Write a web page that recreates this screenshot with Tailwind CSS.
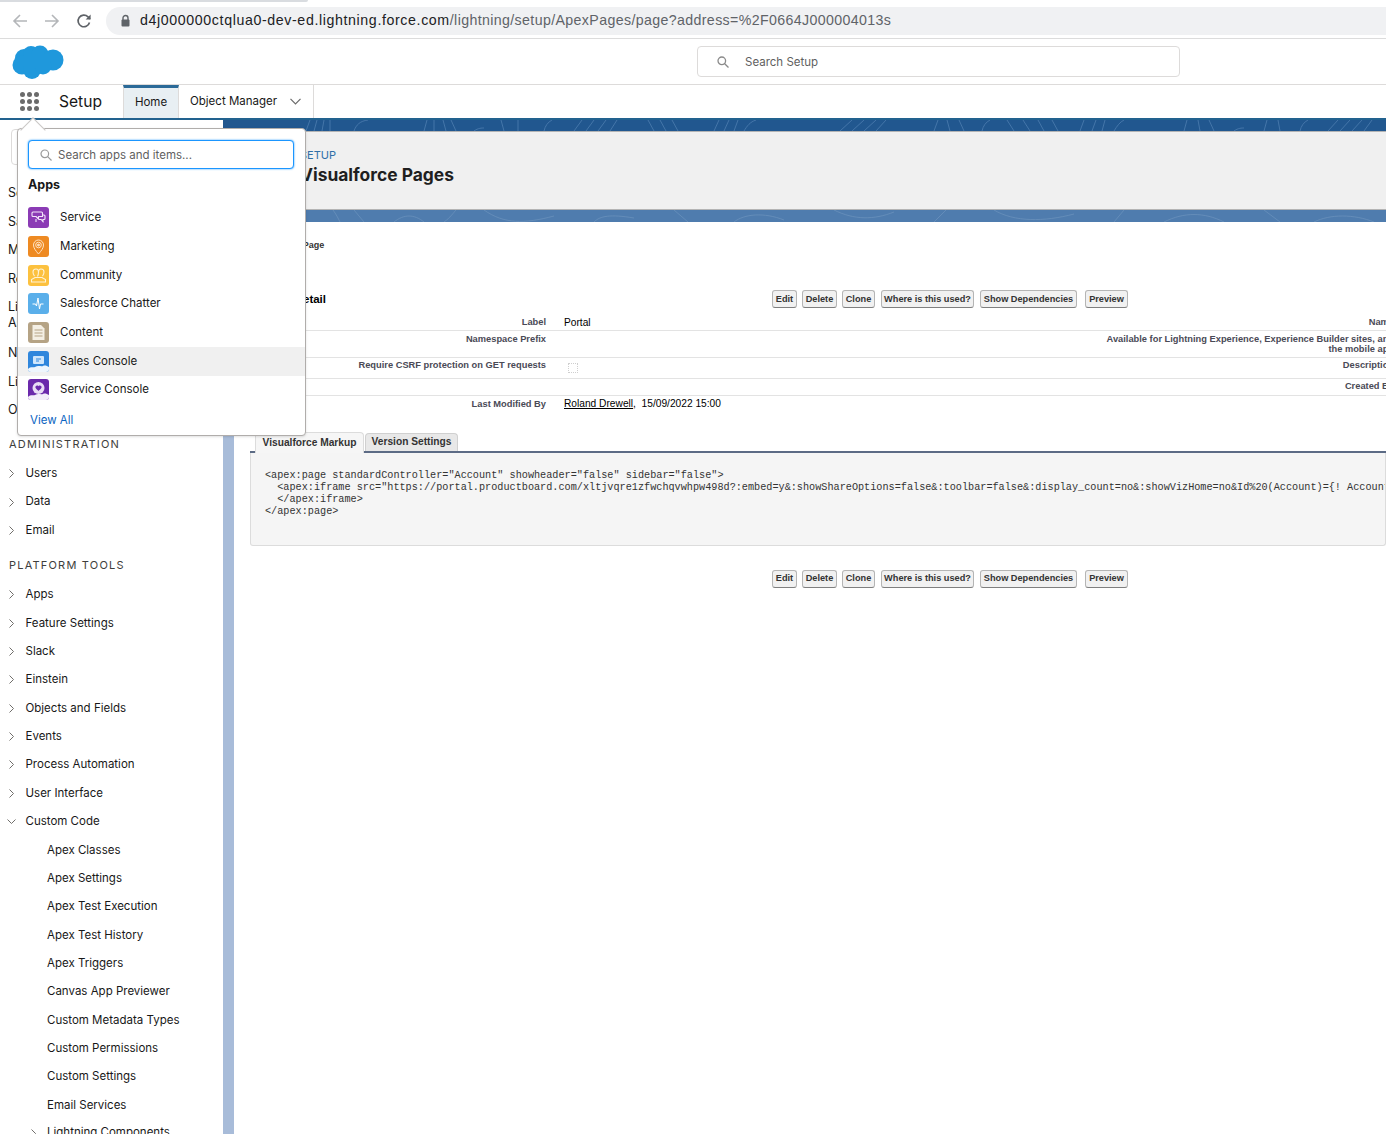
<!DOCTYPE html>
<html lang="en">
<head>
  <meta charset="UTF-8">
  <title>Visualforce Pages</title>
  <script src="https://cdn.jsdelivr.net/npm/@tailwindcss/browser@4"></script>
</head>
<body class="bg-white h-[1134px] overflow-hidden relative font-['Inter',sans-serif] text-[#181818]">

  <!-- browser bar -->
  <div class="h-[39px] border-b border-[#dcdcdc] relative">
    <div class="h-[2px] w-[308px] bg-[#d9dce0] rounded-br"></div>
    <div class="flex items-center h-[37px]">
      <svg class="ml-[12px] w-[16px] h-[16px]" viewBox="0 0 16 16" fill="none" stroke="#b4b6b9" stroke-width="1.6"><path d="M15 8H2M8 2L2 8l6 6"/></svg>
      <svg class="ml-[16px] w-[16px] h-[16px]" viewBox="0 0 16 16" fill="none" stroke="#b4b6b9" stroke-width="1.6"><path d="M1 8h13M8 2l6 6-6 6"/></svg>
      <svg class="ml-[16px] w-[16px] h-[16px]" viewBox="0 0 16 16" fill="none" stroke="#5f6368" stroke-width="1.7"><path d="M13.5 9.5A5.8 5.8 0 1 1 12 3.8L14 6"/><path d="M14.6 1.5v5h-5" fill="#5f6368" stroke="none"/></svg>
      <div class="ml-[14px] flex-1 h-[28px] rounded-l-full bg-[#f0f1f3] flex items-center pl-[14px]">
        <svg class="w-[11px] h-[13px]" viewBox="0 0 11 13"><path d="M3 6V4a2.5 2.5 0 0 1 5 0v2" fill="none" stroke="#5f6368" stroke-width="1.4"/><rect x="1.5" y="5.5" width="8" height="7" rx="1" fill="#5f6368"/></svg>
        <div class="ml-[9px] text-[14.2px] font-['Liberation_Sans',sans-serif] text-[#5f6368] whitespace-nowrap"><span class="text-[#202124] tracking-[0.62px]">d4j000000ctqlua0-dev-ed.lightning.force.com</span><span class="tracking-[0.37px]">/lightning/setup/ApexPages/page?address=%2F0664J000004013s</span></div>
      </div>
    </div>
  </div>

  <!-- global header -->
  <div class="h-[46px] border-b border-[#dddbda] flex items-center relative">
    <svg class="absolute left-[12px] top-[5px] w-[52px] h-[36px]" viewBox="0 0 52 36" fill="#1f98dc">
      <circle cx="12" cy="14" r="9"/><circle cx="19" cy="10" r="8"/><circle cx="28" cy="10" r="8.5"/><circle cx="41" cy="16" r="10.5"/><circle cx="10" cy="21" r="9.5"/><circle cx="20" cy="26" r="9"/><circle cx="31" cy="22" r="8.5"/><rect x="12" y="10" width="26" height="14"/>
    </svg>
    <div class="ml-[697px] w-[483px] h-[31px] border border-[#dddbda] rounded flex items-center">
      <svg class="ml-[19px] w-[12px] h-[12px]" viewBox="0 0 12 12" fill="none" stroke="#8a8a8a" stroke-width="1.3"><circle cx="4.8" cy="4.8" r="3.8"/><path d="M7.7 7.7L11.5 11.5"/></svg>
      <span class="ml-[16px] pt-[2px] text-[11.5px] text-[#5f5f5f]">Search Setup</span>
    </div>
  </div>

  <!-- app nav -->
  <div class="h-[33px] flex items-stretch">
    <div class="w-[123px] flex items-center">
      <div class="ml-[20px] grid grid-cols-3 gap-[2px]">
        <i class="w-[5px] h-[5px] rounded-full bg-[#6b6b6b]"></i><i class="w-[5px] h-[5px] rounded-full bg-[#6b6b6b]"></i><i class="w-[5px] h-[5px] rounded-full bg-[#6b6b6b]"></i>
        <i class="w-[5px] h-[5px] rounded-full bg-[#6b6b6b]"></i><i class="w-[5px] h-[5px] rounded-full bg-[#6b6b6b]"></i><i class="w-[5px] h-[5px] rounded-full bg-[#6b6b6b]"></i>
        <i class="w-[5px] h-[5px] rounded-full bg-[#6b6b6b]"></i><i class="w-[5px] h-[5px] rounded-full bg-[#6b6b6b]"></i><i class="w-[5px] h-[5px] rounded-full bg-[#6b6b6b]"></i>
      </div>
      <span class="ml-[20px] text-[15.6px]">Setup</span>
    </div>
    <div class="w-[56px] bg-[#e8eff3] border-t-[3px] border-[#2b6a98] border-x border-x-[#dddbda] flex items-center justify-center text-[11.5px]">Home</div>
    <div class="w-[135px] border-r border-[#dddbda] flex items-center pl-[11px] text-[11.5px]">
      <span class="pt-[1px]">Object Manager</span>
      <svg class="ml-[13px] w-[11px] h-[7px]" viewBox="0 0 11 7" fill="none" stroke="#6b6b6b" stroke-width="1.2"><path d="M.5 .8L5.5 6l5-5.2"/></svg>
    </div>
  </div>

  <!-- blue rule under nav -->
  <div class="h-[2px] bg-[#22628f]"></div>

  <!-- page body -->
  <div class="flex h-[1014px] overflow-hidden">

    <!-- sidebar -->
    <div class="w-[223px] shrink-0 text-[11.5px]">
      <div class="mx-[11px] mt-[9px] h-[36px] border border-[#dddbda] rounded"></div>
      <div class="mt-[14px] pl-[8px] text-[12.5px]">
        <div class="h-[28.5px] leading-[28.5px]">Service Setup</div>
        <div class="h-[28.5px] leading-[28.5px]">Sales Setup</div>
        <div class="h-[28.5px] leading-[28.5px]">Multi-Factor</div>
        <div class="h-[28.5px] leading-[28.5px]">Release Updates</div>
        <div class="h-[46px] leading-[16px] pt-[6px]">Lightning<br>Assistant</div>
        <div class="h-[28.5px] leading-[28.5px]">New Users</div>
        <div class="h-[28.5px] leading-[28.5px]">Lightning Usage</div>
        <div class="h-[28.5px] leading-[28.5px]">Optimizer</div>
      </div>
      <div class="mt-[5px] h-[28px] leading-[28px] pl-[9px] text-[11px] tracking-[1.2px] text-[#3e3e3c]">ADMINISTRATION</div>
      <div class="mt-[2px]">
        <div class="h-[28.4px] flex items-center"><svg class="ml-[9px] w-[5px] h-[9px]" viewBox="0 0 5 9" fill="none" stroke="#706e6b"><path d="M.5.5l4 4-4 4"/></svg><span class="ml-[11.5px]">Users</span></div>
        <div class="h-[28.4px] flex items-center"><svg class="ml-[9px] w-[5px] h-[9px]" viewBox="0 0 5 9" fill="none" stroke="#706e6b"><path d="M.5.5l4 4-4 4"/></svg><span class="ml-[11.5px]">Data</span></div>
        <div class="h-[28.4px] flex items-center"><svg class="ml-[9px] w-[5px] h-[9px]" viewBox="0 0 5 9" fill="none" stroke="#706e6b"><path d="M.5.5l4 4-4 4"/></svg><span class="ml-[11.5px]">Email</span></div>
      </div>
      <div class="mt-[6px] h-[28px] leading-[28px] pl-[9px] text-[11px] tracking-[1.2px] text-[#3e3e3c]">PLATFORM TOOLS</div>
      <div class="mt-[2px]">
        <div class="h-[28.33px] flex items-center"><svg class="ml-[9px] w-[5px] h-[9px]" viewBox="0 0 5 9" fill="none" stroke="#706e6b"><path d="M.5.5l4 4-4 4"/></svg><span class="ml-[11.5px]">Apps</span></div>
        <div class="h-[28.33px] flex items-center"><svg class="ml-[9px] w-[5px] h-[9px]" viewBox="0 0 5 9" fill="none" stroke="#706e6b"><path d="M.5.5l4 4-4 4"/></svg><span class="ml-[11.5px]">Feature Settings</span></div>
        <div class="h-[28.33px] flex items-center"><svg class="ml-[9px] w-[5px] h-[9px]" viewBox="0 0 5 9" fill="none" stroke="#706e6b"><path d="M.5.5l4 4-4 4"/></svg><span class="ml-[11.5px]">Slack</span></div>
        <div class="h-[28.33px] flex items-center"><svg class="ml-[9px] w-[5px] h-[9px]" viewBox="0 0 5 9" fill="none" stroke="#706e6b"><path d="M.5.5l4 4-4 4"/></svg><span class="ml-[11.5px]">Einstein</span></div>
        <div class="h-[28.33px] flex items-center"><svg class="ml-[9px] w-[5px] h-[9px]" viewBox="0 0 5 9" fill="none" stroke="#706e6b"><path d="M.5.5l4 4-4 4"/></svg><span class="ml-[11.5px]">Objects and Fields</span></div>
        <div class="h-[28.33px] flex items-center"><svg class="ml-[9px] w-[5px] h-[9px]" viewBox="0 0 5 9" fill="none" stroke="#706e6b"><path d="M.5.5l4 4-4 4"/></svg><span class="ml-[11.5px]">Events</span></div>
        <div class="h-[28.33px] flex items-center"><svg class="ml-[9px] w-[5px] h-[9px]" viewBox="0 0 5 9" fill="none" stroke="#706e6b"><path d="M.5.5l4 4-4 4"/></svg><span class="ml-[11.5px]">Process Automation</span></div>
        <div class="h-[28.33px] flex items-center"><svg class="ml-[9px] w-[5px] h-[9px]" viewBox="0 0 5 9" fill="none" stroke="#706e6b"><path d="M.5.5l4 4-4 4"/></svg><span class="ml-[11.5px]">User Interface</span></div>
        <div class="h-[28.33px] flex items-center"><svg class="ml-[7px] w-[9px] h-[5px]" viewBox="0 0 9 5" fill="none" stroke="#706e6b"><path d="M.5.5l4 4 4-4"/></svg><span class="ml-[9.5px]">Custom Code</span></div>
        <div class="h-[28.33px] leading-[28.33px] pl-[47px]">Apex Classes</div>
        <div class="h-[28.33px] leading-[28.33px] pl-[47px]">Apex Settings</div>
        <div class="h-[28.33px] leading-[28.33px] pl-[47px]">Apex Test Execution</div>
        <div class="h-[28.33px] leading-[28.33px] pl-[47px]">Apex Test History</div>
        <div class="h-[28.33px] leading-[28.33px] pl-[47px]">Apex Triggers</div>
        <div class="h-[28.33px] leading-[28.33px] pl-[47px]">Canvas App Previewer</div>
        <div class="h-[28.33px] leading-[28.33px] pl-[47px]">Custom Metadata Types</div>
        <div class="h-[28.33px] leading-[28.33px] pl-[47px]">Custom Permissions</div>
        <div class="h-[28.33px] leading-[28.33px] pl-[47px]">Custom Settings</div>
        <div class="h-[28.33px] leading-[28.33px] pl-[47px]">Email Services</div>
        <div class="h-[28.33px] flex items-center"><svg class="ml-[31px] w-[5px] h-[9px]" viewBox="0 0 5 9" fill="none" stroke="#706e6b"><path d="M.5.5l4 4-4 4"/></svg><span class="ml-[11px]">Lightning Components</span></div>
      </div>
    </div>

    <!-- divider strip -->
    <div class="w-[11px] shrink-0 bg-[#a8bcd9]"><div class="h-[12px] bg-[#21578f]"></div></div>

    <!-- main -->
    <div class="w-[1152px] shrink-0 overflow-hidden">
      <!-- page title band -->
      <div class="h-[102px] bg-[#21578f] relative overflow-hidden">
        <svg class="absolute left-0 top-0 w-[1152px] h-[11px]" viewBox="0 0 1152 11" fill="none" stroke="#4e7eb0" stroke-width="0.8">
          <path d="M72 11l4-11M80 11l3-11M88 11l2-11M96 11V0M120 11c2-6 6-10 14-11M190 11l3-11M200 11V0M212 11l-3-11M222 11l-5-11M240 11c4-3 8-3 10-3M270 11l-3-11M284 11V0M310 11c1-5 4-9 8-11M340 11l8-11M352 11l8-11M364 11l8-11M376 11l7-11M420 11l-6-11M432 11l-6-11M444 11l-6-11M480 11l5-11M490 11l5-11M500 11l4-11M510 11c3-5 6-9 12-11M606 11l12-11M618 11l12-11M630 11l12-11M642 11l10-11M700 11l4-11M716 11l-3-11M730 11l-5-11M748 11c1-5 4-9 8-11M780 11l-7-11M796 11l-7-11M810 11l-6-11M824 11l-6-11M846 11l4-11M858 11l4-11M868 11l3-11M880 11c3-5 6-9 10-11M950 11l3-11M966 11l-2-11M980 11l-5-11M1000 11c4-3 8-3 10-3M1030 11l3-11M1046 11l-2-11M1066 11c1-5 4-9 8-11M1094 11l10-11M1106 11l10-11M1118 11l10-11M1130 11l8-11"/>
        </svg>
        <div class="absolute inset-x-0 bottom-0 h-[12px] bg-[#4f7cae]">
          <svg class="w-[1152px] h-[12px]" viewBox="0 0 1152 12" fill="none" stroke="#6d94bd" stroke-width="0.7"><path d="M106 12c-2-4-4-8-7-12M120 0l10 12M160 12c10-8 20-8 30 0M210 12c6-4 10-10 12-12M250 0c20 14 40 14 70 6M360 12c6-6 16-8 40-4M440 0l14 12M500 12c10-8 30-10 50-2M600 0c20 10 40 10 60 2M700 12l12-12M760 0c20 12 50 12 80 4M880 12l10-12M930 12c20-10 40-10 60 0M1030 0l16 12M1080 12c16-8 40-8 60 0"/></svg>
        </div>
        <div class="absolute inset-x-0 top-[11px] h-[79px] bg-[#f0f0f0] border-y border-[#b4b4b4] pl-[66px] pt-[17px]">
          <div class="text-[11px] leading-[13px] text-[#2f6fa7]">SETUP</div>
          <div class="mt-[1px] text-[17.4px] leading-[24px] font-bold text-[#1f1f1f]">Visualforce Pages</div>
        </div>
      </div>

      <!-- detail page -->
      <div class="font-['Liberation_Sans',sans-serif] text-[#000]">
        <div class="pl-[18px] pt-[17px] h-[49px] text-[9px] leading-[12px] font-bold text-[#333]">Visualforce Page</div>

        <div class="flex items-center h-[18px] mt-[19px]">
          <div class="w-[538px] pl-[30px] pt-[1px] text-[11.5px] font-bold">Page Detail</div>
          <div class="flex text-[9.2px] font-bold text-[#333]">
            <div class="h-[18px] w-[25px] pt-[1px] flex items-center justify-center border border-[#b5b5b5] border-b-[#7f7f7f] rounded-[3px] bg-[#f1f1f1]">Edit</div>
            <div class="ml-[5px] h-[18px] w-[35px] pt-[1px] flex items-center justify-center border border-[#b5b5b5] border-b-[#7f7f7f] rounded-[3px] bg-[#f1f1f1]">Delete</div>
            <div class="ml-[5px] h-[18px] w-[33px] pt-[1px] flex items-center justify-center border border-[#b5b5b5] border-b-[#7f7f7f] rounded-[3px] bg-[#f1f1f1]">Clone</div>
            <div class="ml-[6px] h-[18px] w-[93px] pt-[1px] flex items-center justify-center border border-[#b5b5b5] border-b-[#7f7f7f] rounded-[3px] bg-[#f1f1f1]">Where is this used?</div>
            <div class="ml-[6px] h-[18px] w-[97px] pt-[1px] flex items-center justify-center border border-[#b5b5b5] border-b-[#7f7f7f] rounded-[3px] bg-[#f1f1f1]">Show Dependencies</div>
            <div class="ml-[8px] h-[18px] w-[43px] pt-[1px] flex items-center justify-center border border-[#b5b5b5] border-b-[#7f7f7f] rounded-[3px] bg-[#f1f1f1]">Preview</div>
          </div>
        </div>

        <!-- field table, runs past the right edge like the reference -->
        <div class="mt-[6px] w-[1144px] ml-[16px] text-[9.3px] leading-[10px]">
          <div class="grid grid-cols-[296px_1fr_296px] h-[17px] border-b border-[#e3e3e3]">
            <div class="text-right font-bold text-[#4a4a56] pt-[3px]">Label</div><div class="pl-[18px] pt-[4px] text-[10.2px]">Portal</div><div class="text-right font-bold text-[#4a4a56] pt-[3px]">Name</div>
          </div>
          <div class="grid grid-cols-[296px_1fr_296px] h-[27px] border-b border-[#e3e3e3]">
            <div class="text-right font-bold text-[#4a4a56] pt-[3px]">Namespace Prefix</div><div></div><div class="text-right font-bold text-[#4a4a56] pt-[3px]">Available for Lightning Experience, Experience Builder sites, and the mobile app</div>
          </div>
          <div class="grid grid-cols-[296px_1fr_296px] h-[21px] border-b border-[#e3e3e3]">
            <div class="text-right font-bold text-[#4a4a56] pt-[2px]">Require CSRF protection on GET requests</div><div class="pl-[18px] pt-[5px]"><div class="ml-[4px] w-[10px] h-[10px] border border-dotted border-[#cfcfcf]"></div></div><div class="text-right font-bold text-[#4a4a56] pt-[2px]">Description</div>
          </div>
          <div class="grid grid-cols-[296px_1fr_296px] h-[17px] border-b border-[#e3e3e3]">
            <div></div><div></div><div class="text-right font-bold text-[#4a4a56] pt-[2px]">Created By</div>
          </div>
          <div class="grid grid-cols-[296px_1fr_296px] h-[18px]">
            <div class="text-right font-bold text-[#4a4a56] pt-[3px]">Last Modified By</div><div class="pl-[18px] pt-[3px] text-[10.2px]"><span class="underline">Roland Drewell</span>,&nbsp; 15/09/2022 15:00</div><div></div>
          </div>
        </div>

        <!-- tabs -->
        <div class="mt-[19px] ml-[16px] h-[20px] flex items-end border-b-2 border-[#5c6b85] text-[10.2px] font-bold text-[#333]">
          <div class="ml-[5px] w-[109px] h-[21px] -mb-[2px] bg-[#f6f6f6] border border-b-0 border-[#dcdcdc] rounded-t-[4px] flex items-center justify-center">Visualforce Markup</div>
          <div class="ml-[1px] w-[93px] h-[18px] pb-[1px] bg-[#e8e8e8] border border-b-0 border-[#d0d0d0] rounded-t-[4px] flex items-center justify-center">Version Settings</div>
        </div>
        <div class="ml-[16px] h-[93px] bg-[#f5f5f5] border border-t-0 border-[#dcdcdc] rounded-b-[3px] pl-[14px] pt-[17px] font-['Liberation_Mono',monospace] text-[10.2px] leading-[12px] text-[#333] whitespace-pre overflow-hidden">&lt;apex:page standardController="Account" showheader="false" sidebar="false"&gt;
  &lt;apex:iframe src="https://portal.productboard.com/xltjvqre1zfwchqvwhpw498d?:embed=y&amp;:showShareOptions=false&amp;:toolbar=false&amp;:display_count=no&amp;:showVizHome=no&amp;Id%20(Account)={! Account.Id}"&gt;
  &lt;/apex:iframe&gt;
&lt;/apex:page&gt;</div>

        <div class="mt-[24px] pl-[538px] flex text-[9.2px] font-bold text-[#333]">
          <div class="h-[18px] w-[25px] flex items-center justify-center border border-[#b5b5b5] border-b-[#7f7f7f] rounded-[3px] bg-[#f1f1f1]">Edit</div>
          <div class="ml-[5px] h-[18px] w-[35px] flex items-center justify-center border border-[#b5b5b5] border-b-[#7f7f7f] rounded-[3px] bg-[#f1f1f1]">Delete</div>
          <div class="ml-[5px] h-[18px] w-[33px] flex items-center justify-center border border-[#b5b5b5] border-b-[#7f7f7f] rounded-[3px] bg-[#f1f1f1]">Clone</div>
          <div class="ml-[6px] h-[18px] w-[93px] flex items-center justify-center border border-[#b5b5b5] border-b-[#7f7f7f] rounded-[3px] bg-[#f1f1f1]">Where is this used?</div>
          <div class="ml-[6px] h-[18px] w-[97px] flex items-center justify-center border border-[#b5b5b5] border-b-[#7f7f7f] rounded-[3px] bg-[#f1f1f1]">Show Dependencies</div>
          <div class="ml-[8px] h-[18px] w-[43px] flex items-center justify-center border border-[#b5b5b5] border-b-[#7f7f7f] rounded-[3px] bg-[#f1f1f1]">Preview</div>
        </div>
      </div>
    </div>
  </div>

  <!-- app launcher popover -->
  <div class="absolute left-[17px] top-[128px] w-[289px] h-[308px] bg-white border border-[#b0adab] rounded-[4px] shadow-sm">
    <div class="absolute left-[6px] -top-[8px] w-[18px] h-[18px] rotate-45 bg-white border-l border-t border-[#c9c7c5]"></div>
    <div class="relative ml-[10px] mr-[11px] mt-[11px] h-[29px] border border-[#1b96ff] rounded-[4px] shadow-[0_0_2px_#1b96ff] flex items-center bg-white">
      <svg class="ml-[11px] w-[12px] h-[12px]" viewBox="0 0 12 12" fill="none" stroke="#9a9a9a" stroke-width="1.2"><circle cx="4.8" cy="4.8" r="3.8"/><path d="M7.7 7.7L11.5 11.5"/></svg>
      <span class="ml-[6px] pt-[2px] text-[11.5px] text-[#5f5f5f]">Search apps and items...</span>
    </div>
    <div class="mt-[8px] ml-[10px] text-[12.5px] font-bold leading-[16px]">Apps</div>
    <div class="mt-[10.5px] text-[11.5px]">
      <div class="h-[28.7px] flex items-center pl-[10px]">
        <div class="w-[21px] h-[21px] rounded-[3px] bg-[#8b3bb5]"><svg class="w-[21px] h-[21px]" viewBox="0 0 21 21" fill="none" stroke="#f3e6fa" stroke-width="1.1" stroke-linejoin="round"><path d="M5 5h8.500a1 1 0 0 1 1 1v3.500H10.500V12L8 9.500H5a1 1 0 0 1-1-1V6a1 1 0 0 1 1-1zM14.500 8H16a1 1 0 0 1 1 1v2.500a1 1 0 0 1-1 1h-1.200l.4 2.500-2-2.500h-2.700M8 12v3"/></svg></div>
        <span class="ml-[11px]">Service</span>
      </div>
      <div class="h-[28.7px] flex items-center pl-[10px]">
        <div class="w-[21px] h-[21px] rounded-[3px] bg-[#ee8a22]"><svg class="w-[21px] h-[21px]" viewBox="0 0 21 21" fill="none" stroke="#ffe3c4" stroke-width="1"><path d="M10.500 18C7.500 14.500 5.500 12 5.500 9a5 5 0 0 1 10 0c0 3-2 5.500-5 9z"/><circle cx="10.500" cy="9" r="2.800"/><circle cx="10.500" cy="9" r="1" fill="#ffe3c4"/></svg></div>
        <span class="ml-[11px]">Marketing</span>
      </div>
      <div class="h-[28.7px] flex items-center pl-[10px]">
        <div class="w-[21px] h-[21px] rounded-[3px] bg-[#fcc13f]"><svg class="w-[21px] h-[21px]" viewBox="0 0 21 21" fill="none" stroke="#fff3d6" stroke-width="1.100"><path d="M8 4c2 0 2.500 1.500 2.500 3s-.5 3.500-1 4.500M13 4c-2 0-2.500 1.500-2.500 3M13 4c2 0 3 1.500 3 3s-.5 3-1.500 4M8 4C6 4 5 5.500 5 7s.5 3 1.500 4"/><path d="M3.500 17v-2.500L7 12.500h7l3.500 2V17z"/></svg></div>
        <span class="ml-[11px]">Community</span>
      </div>
      <div class="h-[28.7px] flex items-center pl-[10px]">
        <div class="w-[21px] h-[21px] rounded-[3px] bg-[#5aafea]"><svg class="w-[21px] h-[21px]" viewBox="0 0 21 21" fill="none" stroke="#fff" stroke-width="1"><path d="M4.500 11h3l1 2 1.500-8 1.500 11 1-5h3"/></svg></div>
        <span class="ml-[11px]">Salesforce Chatter</span>
      </div>
      <div class="h-[28.7px] flex items-center pl-[10px]">
        <div class="w-[21px] h-[21px] rounded-[3px] bg-[#b5a385]"><svg class="w-[21px] h-[21px]" viewBox="0 0 21 21"><path d="M4.500 3h8.500l3.500 3.500V18H4.500z" fill="#f4efe4"/><path d="M6.500 8h8M6.500 11h8M6.500 14h8" stroke="#b5a385" stroke-width="1"/></svg></div>
        <span class="ml-[11px]">Content</span>
      </div>
      <div class="h-[28.7px] flex items-center pl-[10px] bg-[#f0f0f0]">
        <div class="w-[21px] h-[21px] rounded-[3px] bg-[#2f86dc] flex items-center justify-center overflow-hidden"><svg class="w-[21px] h-[21px]" viewBox="0 0 21 21"><rect x="5" y="5" width="11" height="8" rx="1" fill="#cfe6fb"/><path d="M8 8h5M8 10h3" stroke="#2f86dc"/><path d="M0 18c3-3 5-1 7-2 3-2 6 0 8-1 2-1 4 0 6 1v5H0z" fill="#eef6fd"/></svg></div>
        <span class="ml-[11px]">Sales Console</span>
      </div>
      <div class="h-[28.7px] flex items-center pl-[10px]">
        <div class="w-[21px] h-[21px] rounded-[3px] bg-[#6b29ab] flex items-center justify-center overflow-hidden"><svg class="w-[21px] h-[21px]" viewBox="0 0 21 21"><circle cx="10.500" cy="9" r="6" fill="#e9dcf5"/><path d="M7.500 7.500c1-1.500 3-1 3 0 0-1 2-1.500 3 0 .7 1.500-2 3.500-3 4.500-1-1-3.700-3-3-4.500z" fill="#6b29ab"/><path d="M0 18c3-3 5-1 7-2 3-2 6 0 8-1 2-1 4 0 6 1v5H0z" fill="#f2ecf9"/></svg></div>
        <span class="ml-[11px]">Service Console</span>
      </div>
    </div>
    <div class="mt-[7.5px] ml-[12px] text-[11.5px] leading-[16px] text-[#0b65c2]">View All</div>
  </div>

</body>
</html>
